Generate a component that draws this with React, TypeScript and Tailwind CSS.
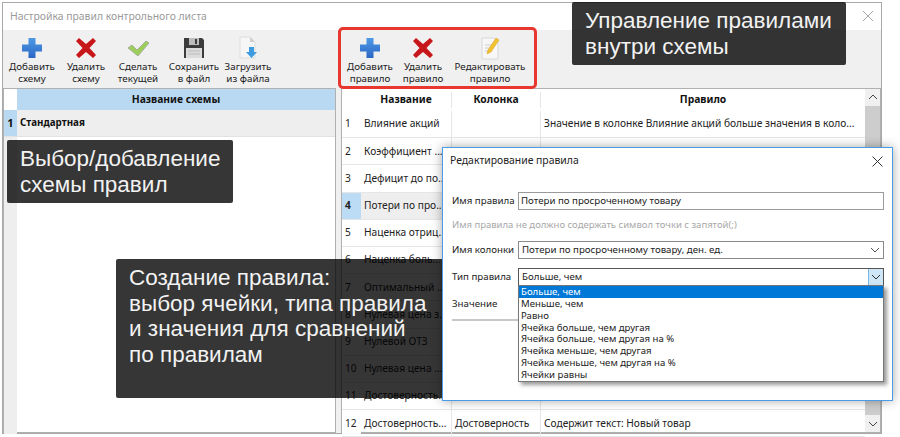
import React from "react";

const Plus = () => (
  <svg width="24" height="24" viewBox="0 0 24 24"><defs><linearGradient id="pl" x1="0" y1="0" x2="0" y2="1"><stop offset="0" stopColor="#4f9ae6" /><stop offset="1" stopColor="#2a66c4" /></linearGradient></defs><path d="M8.500 2h7v6.500H22v7h-6.500V22h-7v-6.500H2v-7h6.500z" fill="url(#pl)" /></svg>
);
const Cross = () => (
  <svg width="24" height="24" viewBox="0 0 24 24"><path d="M5 2l7 6 7-6 3 3-6.500 7 6.500 7-3 3-7-6-7 6-3-3 6.500-7L2 5z" fill="#c8171a" /></svg>
);
const Check = () => (
  <svg width="24" height="24" viewBox="0 0 24 24"><path d="M2 12l4-3 5 5L20 5l3 2-11 13z" fill="#9ccf5a" stroke="#a8b09c" strokeWidth="1" /></svg>
);
const Floppy = () => (
  <svg width="24" height="24" viewBox="0 0 24 24"><path d="M2 2h18l2 2v18H2z" fill="#3c3c3c" /><rect x="7" y="2" width="10" height="7" fill="#bdbdbd" /><rect x="13" y="3" width="2" height="5" fill="#3c3c3c" /><rect x="4" y="12" width="16" height="10" fill="#dcdcdc" /><path d="M6 15h12M6 18h12" stroke="#bbbbbb" /></svg>
);
const Load = () => (
  <svg width="24" height="24" viewBox="0 0 24 24"><path d="M4 1h10l5 5v16H4z" fill="#f6f6f6" stroke="#dddddd" /><path d="M14 1v5h5z" fill="#cfcfcf" /><path d="M13 11h5v5h3l-5.500 6-5.500-6h3z" fill="#3d9be0" /></svg>
);
const Edit = () => (
  <svg width="24" height="24" viewBox="0 0 24 24"><path d="M4 2h12l4 4v17H4z" fill="#f7f7f7" stroke="#d8d8d8" /><path d="M7 9h7M7 12h6M7 15h4" stroke="#cccccc" /><path d="M18 2l3 2-8 12-4 2 1-4z" fill="#f2c230" stroke="#d89a20" strokeWidth="0.5" /></svg>
);
const Chevron = ({ color = "#555555" }: { color?: string }) => (
  <svg width="10" height="6" viewBox="0 0 10 6" fill="none"><path d="M1 1l4 4 4-4" stroke={color} strokeWidth="1" /></svg>
);

const Tool = ({ icon, a, b, w }: { icon: React.ReactNode; a: string; b: string; w: string }) => (
  <div className={`flex flex-col items-center ${w}`}>
    <div className="h-[24px] w-[24px]">{icon}</div>
    <div className="mt-[1px] whitespace-nowrap text-center text-[9.800px] leading-[12px] text-[#222222]">{a}<br />{b}</div>
  </div>
);

const rows: [string, string, string, string][] = [
  ["1", "Влияние акций", "", "Значение в колонке Влияние акций больше значения в коло..."],
  ["2", "Коэффициент ...", "Коэффициент", "Содержит 300"],
  ["3", "Дефицит до по...", "", ""],
  ["4", "Потери по про...", "", ""],
  ["5", "Наценка отриц...", "", ""],
  ["6", "Наценка боль...", "", ""],
  ["7", "Оптимальный ...", "", ""],
  ["8", "Нулевая цена з...", "", ""],
  ["9", "Нулевой ОТЗ", "", ""],
  ["10", "Нулевая цена ...", "", ""],
  ["11", "Достоверность...", "", ""],
  ["12", "Достоверность...", "Достоверность", "Содержит текст: Новый товар"],
];

const items = ["Меньше, чем", "Равно", "Ячейка больше, чем другая", "Ячейка больше, чем другая на %", "Ячейка меньше, чем другая", "Ячейка меньше, чем другая на %", "Ячейки равны"];

const Note = ({ className, children }: { className: string; children: React.ReactNode }) => (
  <div className={`absolute rounded-[2px] bg-black/[0.79] font-['Liberation_Sans',sans-serif] text-[22.500px] leading-[25.500px] text-[#f2f2f2] ${className}`}>{children}</div>
);

export default function App() {
  return (
    <div className="relative h-[437px] w-[900px] overflow-hidden bg-white font-['Noto_Sans',sans-serif]">
      <div className="ml-[2px] mt-[2px] flex h-[432px] w-[880px] flex-col border border-[#a9a9a9] bg-white">
        <div className="flex h-[27px] shrink-0 items-center justify-between pl-[7px] pr-[7px] text-[10.400px] text-[#9a9a9a]">
          <span>Настройка правил контрольного листа</span>
          <svg className="-mt-[2px]" width="12" height="12" viewBox="0 0 12 12"><path d="M1 1l10 10M11 1L1 11" stroke="#a8a8a8" strokeWidth="1" /></svg>
        </div>
        <div className="flex h-[58px] shrink-0 bg-[#f0f0f0] pt-[6px]">
          <div className="flex w-[333px] pl-[2px]">
            <Tool icon={<Plus />} a="Добавить" b="схему" w="w-[54px]" />
            <Tool icon={<Cross />} a="Удалить" b="схему" w="w-[54px]" />
            <Tool icon={<Check />} a="Сделать" b="текущей" w="w-[50px]" />
            <Tool icon={<Floppy />} a="Сохранить" b="в файл" w="w-[62px]" />
            <Tool icon={<Load />} a="Загрузить" b="из файла" w="w-[46px]" />
          </div>
          <div className="flex pl-[8px]">
            <Tool icon={<Plus />} a="Добавить" b="правило" w="w-[52px]" />
            <Tool icon={<Cross />} a="Удалить" b="правило" w="w-[54px]" />
            <Tool icon={<Edit />} a="Редактировать" b="правило" w="w-[80px]" />
          </div>
        </div>
        <div className="flex min-h-0 flex-1 bg-[#f0f0f0]">
          <div className="w-[333px] shrink-0 border border-[#b0b0b0] bg-white">
            <div className="flex h-[21px] text-[10.300px] font-bold text-[#111111]">
              <div className="w-[13px] bg-white" />
              <div className="flex flex-1 items-center justify-center bg-[#b9d9f2]">Название схемы</div>
            </div>
            <div className="flex h-[27px] border-b border-[#e2e2e2] font-bold text-[#111111]">
              <div className="flex w-[13px] items-center justify-center bg-[#b9d9f2] text-[11px]">1</div>
              <div className="flex flex-1 items-center bg-[#eeeeee] pl-[3px] text-[9.800px]">Стандартная</div>
            </div>
            <div className="h-[297px] w-[13px] bg-[#eeeeee]" />
          </div>
          <div className="ml-[5px] flex min-w-0 flex-1 border border-[#b0b0b0] bg-white">
            <div className="min-w-0 flex-1">
              <div className="flex h-[22px] items-center text-[10.300px] font-bold text-[#111111]">
                <div className="w-[19px]" />
                <div className="w-[91px] border-r border-[#e6e6e6] text-center">Название</div>
                <div className="w-[89px] border-r border-[#e6e6e6] text-center">Колонка</div>
                <div className="flex-1 text-center">Правило</div>
              </div>
              {rows.map((r) => {
                const sel = r[0] === "4";
                return (
                  <div key={r[0]} className={`flex h-[27.200px] items-center border-b border-[#e6e6e6] text-[10.200px] text-[#222222] ${sel ? "bg-[#eeeeee]" : ""}`}>
                    <div className={`flex h-full w-[19px] items-center pl-[3px] ${sel ? "bg-[#bcdcf5] font-bold" : "bg-white"}`}>{r[0]}</div>
                    <div className="flex h-full w-[91px] items-center overflow-hidden whitespace-nowrap border-r border-[#e6e6e6] pl-[3px]">{r[1]}</div>
                    <div className="flex h-full w-[89px] items-center overflow-hidden whitespace-nowrap border-r border-[#e6e6e6] pl-[3px]">{r[2]}</div>
                    <div className="flex h-full flex-1 items-center overflow-hidden whitespace-nowrap pl-[3px]">{r[3]}</div>
                  </div>
                );
              })}
            </div>
            <div className="flex w-[15px] shrink-0 flex-col items-center bg-[#f0f0f0] py-[5px]">
              <div className="rotate-180"><Chevron color="#444444" /></div>
              <div className="my-[6px] w-full flex-1 bg-[#cdcdcd]" />
              <Chevron color="#444444" />
            </div>
          </div>
        </div>
      </div>

      {/* Callouts */}
      <div className="absolute left-[338px] top-[27px] h-[62px] w-[199px] rounded-[5px] border-[3px] border-[#e8372f]" />
      <Note className="left-[572px] top-[2px] h-[63px] w-[274px] pl-[13px] pt-[6px]">Управление правилами<br />внутри схемы</Note>
      <Note className="left-[7px] top-[140px] h-[63px] w-[226px] pl-[13px] pt-[6px]">Выбор/добавление<br />схемы правил</Note>
      <Note className="left-[116px] top-[259px] h-[139px] w-[330px] pl-[13px] pt-[6px]">Создание правила:<br />выбор ячейки, типа правила<br />и значения для сравнений<br />по правилам</Note>

      {/* Dialog */}
      <div className="absolute left-[442px] top-[147px] h-[254px] w-[451px] border border-[#4a9be8] bg-white pl-[9px] pr-[8px] text-[9.700px] text-[#222222] shadow-[0_0_10px_rgba(0,0,0,0.35)]">
        <div className="flex h-[26px] items-center justify-between text-[10.400px]">
          <span className="-ml-[2px]">Редактирование правила</span>
          <svg className="mr-[1px]" width="11" height="11" viewBox="0 0 11 11"><path d="M0.500 0.500l10 10M10.500 0.500l-10 10" stroke="#333333" /></svg>
        </div>
        <div className="mt-[18px] flex h-[18px] items-center">
          <span className="w-[66px] shrink-0 whitespace-nowrap">Имя правила</span>
          <div className="flex h-[18px] flex-1 items-center border border-[#9a9a9a] pl-[2px]">Потери по просроченному товару</div>
        </div>
        <div className="flex h-[31px] items-center text-[9.500px] text-[#a8a8a8]">Имя правила не должно содержать символ точки с запятой(;)</div>
        <div className="flex h-[18px] items-center">
          <span className="w-[66px] shrink-0 whitespace-nowrap">Имя колонки</span>
          <div className="flex h-[18px] flex-1 items-center justify-between border border-[#8a8a8a] pl-[3px] pr-[3px]">Потери по просроченному товару, ден. ед.<Chevron /></div>
        </div>
        <div className="mt-[9px] flex h-[18px] items-center">
          <span className="w-[66px] shrink-0 whitespace-nowrap">Тип правила</span>
          <div className="flex h-[18px] flex-1 items-center justify-between border border-[#555555] pl-[3px]">
            Больше, чем
            <div className="flex h-full w-[15px] items-center justify-center border-l border-[#7ab8e8] bg-[#cfe6f7]"><Chevron color="#333333" /></div>
          </div>
        </div>
        <div className="mt-[9px] h-[26px] w-[66px] border-b-2 border-[#c8c8c8] leading-[18px]">Значение</div>
        <div className="absolute left-[153px] top-[232px] flex gap-[10px]">
          <div className="h-[2px] w-[66px] bg-[#2f74d0]" />
          <div className="h-[2px] w-[66px] bg-[#8a8a8a]" />
        </div>
        <div className="absolute left-[75px] top-[137px] w-[366px] border border-[#777777] bg-white text-[9.600px] shadow-[3px_3px_4px_rgba(0,0,0,0.4)]">
          <div className="h-[12px] bg-[#0078d7] pl-[2px] leading-[12px] text-white">Больше, чем</div>
          {items.map((t) => (
            <div key={t} className="h-[11.800px] pl-[2px] leading-[11.800px]">{t}</div>
          ))}
        </div>
      </div>
    </div>
  );
}
